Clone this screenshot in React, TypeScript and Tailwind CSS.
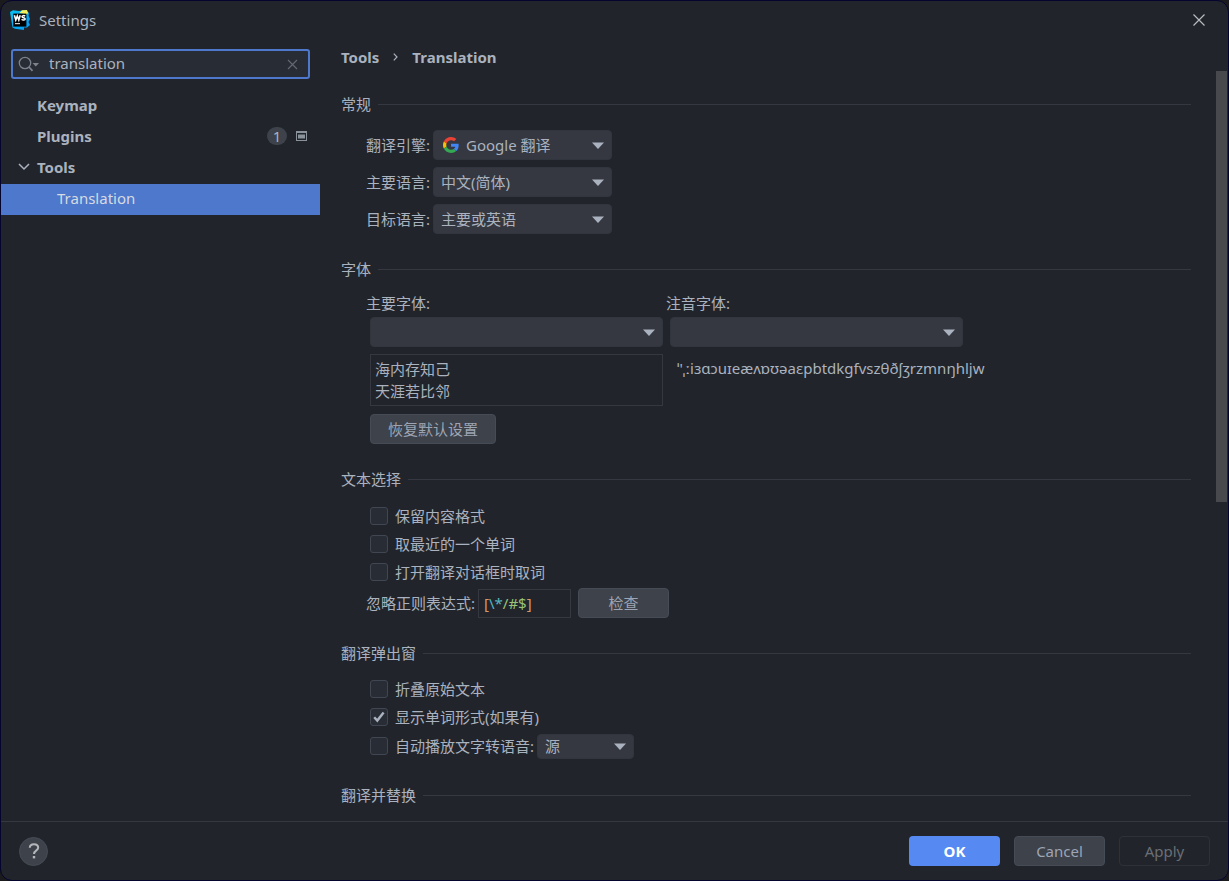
import type { ReactNode } from "react";
import { useState } from "react";

function LogoIcon() {
   return (
      <svg width="20" height="20" viewBox="0 0 20 20" aria-hidden="true">
         <defs>
            <linearGradient id="ws" x1="0" y1="0" x2="1" y2="1">
               <stop offset="0" stopColor="#07c3f2" />
               <stop offset="0.6" stopColor="#06a8f4" />
               <stop offset="1" stopColor="#0798f2" />
            </linearGradient>
         </defs>
         <path d="M0 2 3 0.3 9 1 16 0 19 3 18.6 6 20 9 18.5 12 20 15 17 17.5 14 17.5 14 20 5 18.8 2.5 17.5Z" fill="url(#ws)" />
         <path d="M9.5 3 12 0.2 17 0 18 3 16.5 4.5Z" fill="#f4f25c" />
         <rect x="3.2" y="3.6" width="13.2" height="13" fill="#000" />
         <path d="M4.4 5.2 5.8 10 7.3 6 8.8 10 10.2 5.2" fill="none" stroke="#fff" strokeWidth="1.6" />
         <path
            d="M15.2 6.3C14.3 5.3 12 5.4 12 6.7S15.2 7.5 15.2 8.9 12.6 10.3 11.6 9.2"
            fill="none"
            stroke="#fff"
            strokeWidth="1.5"
         />
         <rect x="5" y="13" width="5" height="1.2" fill="#ccc" />
      </svg>
   );
}

function GoogleIcon() {
   return (
      <svg width="16" height="16" viewBox="0 0 48 48" aria-hidden="true">
         <path fill="#EA4335" d="M24 9.5c3.54 0 6.71 1.22 9.21 3.6l6.85-6.85C35.9 2.38 30.47 0 24 0 14.62 0 6.51 5.38 2.56 13.22l7.98 6.19C12.43 13.72 17.74 9.5 24 9.5z" />
         <path fill="#4285F4" d="M46.98 24.55c0-1.57-.15-3.09-.38-4.55H24v9.02h12.94c-.58 2.96-2.26 5.48-4.78 7.18l7.73 6c4.51-4.18 7.09-10.36 7.09-17.65z" />
         <path fill="#FBBC05" d="M10.53 28.59c-.48-1.45-.76-2.99-.76-4.59s.27-3.14.76-4.59l-7.98-6.19C.92 16.46 0 20.12 0 24c0 3.88.92 7.54 2.56 10.78l7.97-6.19z" />
         <path fill="#34A853" d="M24 48c6.48 0 11.93-2.13 15.89-5.81l-7.73-6c-2.15 1.45-4.92 2.3-8.16 2.3-6.26 0-11.57-4.22-13.47-9.91l-7.98 6.19C6.51 42.62 14.62 48 24 48z" />
      </svg>
   );
}

type DropdownProps = {
   id: string;
   options: string[];
   className: string;
   icon?: ReactNode;
};

function Dropdown({ id, options, className, icon }: DropdownProps) {
   return (
      <div className={`relative ${className}`}>
         <select
            id={id}
            className={`block h-full w-full appearance-none rounded-sm border border-[#31353d] bg-[#353840] pr-7 text-[#abb2bf] outline-none ${
               icon ? "pl-8" : "pl-[7px]"
            }`}
         >
            {options.map((option) => (
               <option key={option}>{option}</option>
            ))}
         </select>
         {icon && (
            <span className="pointer-events-none absolute inset-y-0 left-[10px] flex items-center">
               {icon}
            </span>
         )}
         <span className="pointer-events-none absolute inset-y-0 right-2 flex items-center">
            <svg width="12" height="7" viewBox="0 0 12 7" aria-hidden="true">
               <path d="M0 0.5h12L6 7z" fill="#abb2bf" />
            </svg>
         </span>
      </div>
   );
}

function Section({ title, children }: { title: string; children?: ReactNode }) {
   return (
      <section>
         <div className="flex h-6 items-center gap-[7px]">
            <h2>{title}</h2>
            <div className="h-px flex-1 bg-[#353840]"></div>
         </div>
         {children}
      </section>
   );
}

function Checkbox({ id, label, defaultChecked }: { id: string; label: string; defaultChecked?: boolean }) {
   return (
      <div className="flex h-7 items-center gap-[7px]">
         <span className="relative flex">
            <input
               id={id}
               type="checkbox"
               defaultChecked={defaultChecked}
               className="peer size-[18px] appearance-none rounded-[3px] border border-[#414752] bg-[#282c34]"
            />
            <svg
               width="18"
               height="18"
               viewBox="0 0 18 18"
               className="pointer-events-none absolute inset-0 hidden peer-checked:block"
               aria-hidden="true"
            >
               <path d="M4.2 9.2 7.3 12.6 13.6 4.4" fill="none" stroke="#abb2bf" strokeWidth="2.4" />
            </svg>
         </span>
         <label htmlFor={id}>{label}</label>
      </div>
   );
}

const engineRows = [
   { id: "engine", label: "翻译引擎:", option: "Google 翻译", icon: <GoogleIcon /> },
   { id: "primary", label: "主要语言:", option: "中文(简体)" },
   { id: "target", label: "目标语言:", option: "主要或英语" },
];

const buttonStyle = "h-[30px] rounded-sm border border-[#464c55] bg-[#3d424b] text-[#9da5b4]";

function Sidebar() {
   const [query, setQuery] = useState("translation");

   return (
      <aside className="w-[319px] shrink-0 pt-[11px]">
         <div className="relative mr-[10px] ml-[10px]">
            <input
               type="text"
               aria-label="Search settings"
               value={query}
               onChange={(e) => setQuery(e.target.value)}
               className="block h-[30px] w-full rounded-[3px] border-2 border-[#4d78cc] bg-[#282c34] pr-8 pb-0.5 pl-9 outline-none"
            />
            <span className="pointer-events-none absolute inset-y-0 left-[7px] flex items-center">
               <svg width="22" height="16" viewBox="0 0 22 16" aria-hidden="true">
                  <circle cx="7" cy="7" r="5.7" fill="none" stroke="#7c828d" strokeWidth="1.3" />
                  <path d="M11 11 14.5 14.8" stroke="#7c828d" strokeWidth="1.8" />
                  <path d="M14.5 7h6.5l-3.2 3.6z" fill="#7c828d" />
               </svg>
            </span>
            <button
               aria-label="Clear"
               onClick={() => setQuery("")}
               className="absolute inset-y-0 right-[12px] flex items-center"
            >
               <svg width="11" height="11" viewBox="0 0 11 11" aria-hidden="true">
                  <path d="M1 1l9 9M10 1l-9 9" stroke="#646a75" strokeWidth="1.1" />
               </svg>
            </button>
         </div>
         <nav className="mt-3 font-bold">
            <a href="#keymap" className="flex h-[31px] items-center pb-1 pl-9">
               Keymap
            </a>
            <a href="#plugins" className="flex h-[31px] items-center pr-3 pb-1 pl-9">
               <span className="flex-1">Plugins</span>
               <span className="flex h-[18px] w-5 items-center justify-center rounded-full bg-[#3d424b] font-normal">
                  1
               </span>
               <svg width="11" height="10" viewBox="0 0 11 10" className="mr-px ml-[9px]" aria-hidden="true">
                  <path d="M0 0h11v10H0zM1 2v7h9V2z" fill="#8a939b" fillRule="evenodd" />
                  <rect x="2" y="3.5" width="7" height="4" fill="#8a939b" />
               </svg>
            </a>
            <a href="#tools" className="flex h-[31px] items-center pb-1 pl-[17px]">
               <svg width="12" height="8" viewBox="0 0 12 8" className="mr-[7px]" aria-hidden="true">
                  <path d="M1 1l5 5 5-5" fill="none" stroke="#abb2bf" strokeWidth="1.5" />
               </svg>
               Tools
            </a>
            <a href="#translation" className="flex h-[31px] items-center bg-[#4d78cc] pb-1 pl-14 font-normal text-[#d7dae0]">
               Translation
            </a>
         </nav>
      </aside>
   );
}

export default function App() {
   return (
      <div className="bg-[#1b1b1d]">
         <div className="flex min-h-screen flex-col rounded-xl border border-[#04042e] bg-[#21252b] font-['Noto_Sans','Noto_Sans_CJK_SC',sans-serif] text-[15px] leading-5 text-[#abb2bf]">
            <header className="flex h-[37px] items-center gap-[9px] pr-[23px] pl-[9px]">
               <LogoIcon />
               <h1 className="flex-1">Settings</h1>
               <button aria-label="Close">
                  <svg width="12" height="12" viewBox="0 0 12 12" aria-hidden="true">
                     <path d="M0.5 0.5l11 11M11.5 0.5l-11 11" stroke="#b9bbbf" strokeWidth="1.2" />
                  </svg>
               </button>
            </header>

            <div className="flex flex-1">
               <Sidebar />
               <main className="min-w-0 flex-1 pt-2 pr-[25px] pl-[21px]">
                  <div className="flex h-[22px] items-center font-bold">
                     <a href="#tools">Tools</a>
                     <svg width="5" height="8" viewBox="0 0 5 8" className="mx-[14px]" aria-hidden="true">
                        <path d="M0.8 0.6 4 4 0.8 7.4" fill="none" stroke="#abb2bf" strokeWidth="1.2" />
                     </svg>
                     <span>Translation</span>
                  </div>

                  <div className="mt-6 flex flex-col gap-[23px]">
                     <Section title="常规">
                        <div className="mt-[14px] flex flex-col gap-[7px] pl-[25px]">
                           {engineRows.map((row) => (
                              <div key={row.id} className="flex items-center gap-[3px]">
                                 <label htmlFor={row.id}>{row.label}</label>
                                 <Dropdown id={row.id} options={[row.option]} icon={row.icon} className="h-[30px] w-[179px]" />
                              </div>
                           ))}
                        </div>
                     </Section>

                     <Section title="字体">
                        <div className="mt-3 flex gap-[3px] pl-[25px]">
                           <div>
                              <label htmlFor="mainFont">主要字体:</label>
                              <div className="pl-1">
                                 <Dropdown id="mainFont" options={[""]} className="mt-1 h-[30px] w-[293px]" />
                                 <textarea
                                    aria-label="字体预览"
                                    rows={2}
                                    defaultValue={"海内存知己\n天涯若比邻"}
                                    className="mt-[7px] block h-[52px] w-full resize-none overflow-hidden border border-[#353840] px-1 py-[3px] leading-[22px] outline-none"
                                 />
                                 <button className={`mt-2 w-[126px] ${buttonStyle}`}>恢复默认设置</button>
                              </div>
                           </div>
                           <div>
                              <label htmlFor="phoneticFont">注音字体:</label>
                              <div className="pl-1">
                                 <Dropdown id="phoneticFont" options={[""]} className="mt-1 h-[30px] w-[293px]" />
                                 <p className="mt-[11px] pl-[7px] whitespace-nowrap">ˈ'ˌːiɜɑɔuɪeæʌɒʊəaɛpbtdkgfvszθðʃʒrzmnŋhljw</p>
                              </div>
                           </div>
                        </div>
                     </Section>

                     <Section title="文本选择">
                        <div className="mt-[11px] pl-[29px]">
                           <Checkbox id="keepFormat" label="保留内容格式" />
                           <Checkbox id="nearest" label="取最近的一个单词" />
                           <Checkbox id="takeWord" label="打开翻译对话框时取词" />
                        </div>
                        <div className="mt-[2px] flex items-center pl-[25px]">
                           <label htmlFor="ignore">忽略正则表达式:</label>
                           <div className="relative ml-[3px]">
                              <input
                                 id="ignore"
                                 type="text"
                                 readOnly
                                 value="[\*/#$]"
                                 className="block h-[29px] w-[93px] border border-[#353840] px-[5px] text-transparent outline-none"
                              />
                              <span
                                 aria-hidden="true"
                                 className="pointer-events-none absolute inset-y-0 left-[6px] flex items-center text-[#98c379]"
                              >
                                 <span className="text-[#d19a66]">[</span>
                                 <span className="text-[#56b6c2]">\*</span>
                                 /#$
                                 <span className="text-[#d19a66]">]</span>
                              </span>
                           </div>
                           <button className={`ml-[7px] w-[91px] ${buttonStyle}`}>检查</button>
                        </div>
                     </Section>

                     <Section title="翻译弹出窗">
                        <div className="mt-[10px] pl-[29px]">
                           <Checkbox id="fold" label="折叠原始文本" />
                           <Checkbox id="wordForms" label="显示单词形式(如果有)" defaultChecked />
                           <div className="mt-px flex items-center gap-[3px]">
                              <Checkbox id="autoPlay" label="自动播放文字转语音:" />
                              <Dropdown id="ttsSource" options={["源"]} className="h-[25px] w-[97px]" />
                           </div>
                        </div>
                     </Section>

                     <Section title="翻译并替换" />
                  </div>
               </main>
               <div className="w-3 shrink-0 pt-[33px]">
                  <div className="mr-px h-[431px] bg-[#47494d]"></div>
               </div>
            </div>

            <footer className="flex h-[59px] items-center gap-[14px] border-t border-[#353840] pr-[18px] pl-[18px]">
               <button
                  aria-label="Help"
                  className="mr-auto flex size-[29px] items-center justify-center rounded-full border border-[#464c55] bg-[#3d424b]"
               >
                  <svg width="12" height="16" viewBox="0 0 12 16" aria-hidden="true">
                     <path
                        d="M1.8 4.8C1.8 2.6 3.6 1.3 6 1.3S10.2 2.7 10.2 4.8C10.2 7.4 6 7.4 6 11"
                        fill="none"
                        stroke="#b4b6ba"
                        strokeWidth="2"
                     />
                     <rect x="4.8" y="13" width="2.4" height="2.4" fill="#b4b6ba" />
                  </svg>
               </button>
               <button className="h-[30px] w-[91px] rounded-sm bg-[#568af2] font-bold text-white">OK</button>
               <button className={`w-[91px] ${buttonStyle}`}>Cancel</button>
               <button disabled className="h-[30px] w-[91px] rounded-sm border border-[#2d3138] text-[#6b6e74]">
                  Apply
               </button>
            </footer>
         </div>
      </div>
   );
}
